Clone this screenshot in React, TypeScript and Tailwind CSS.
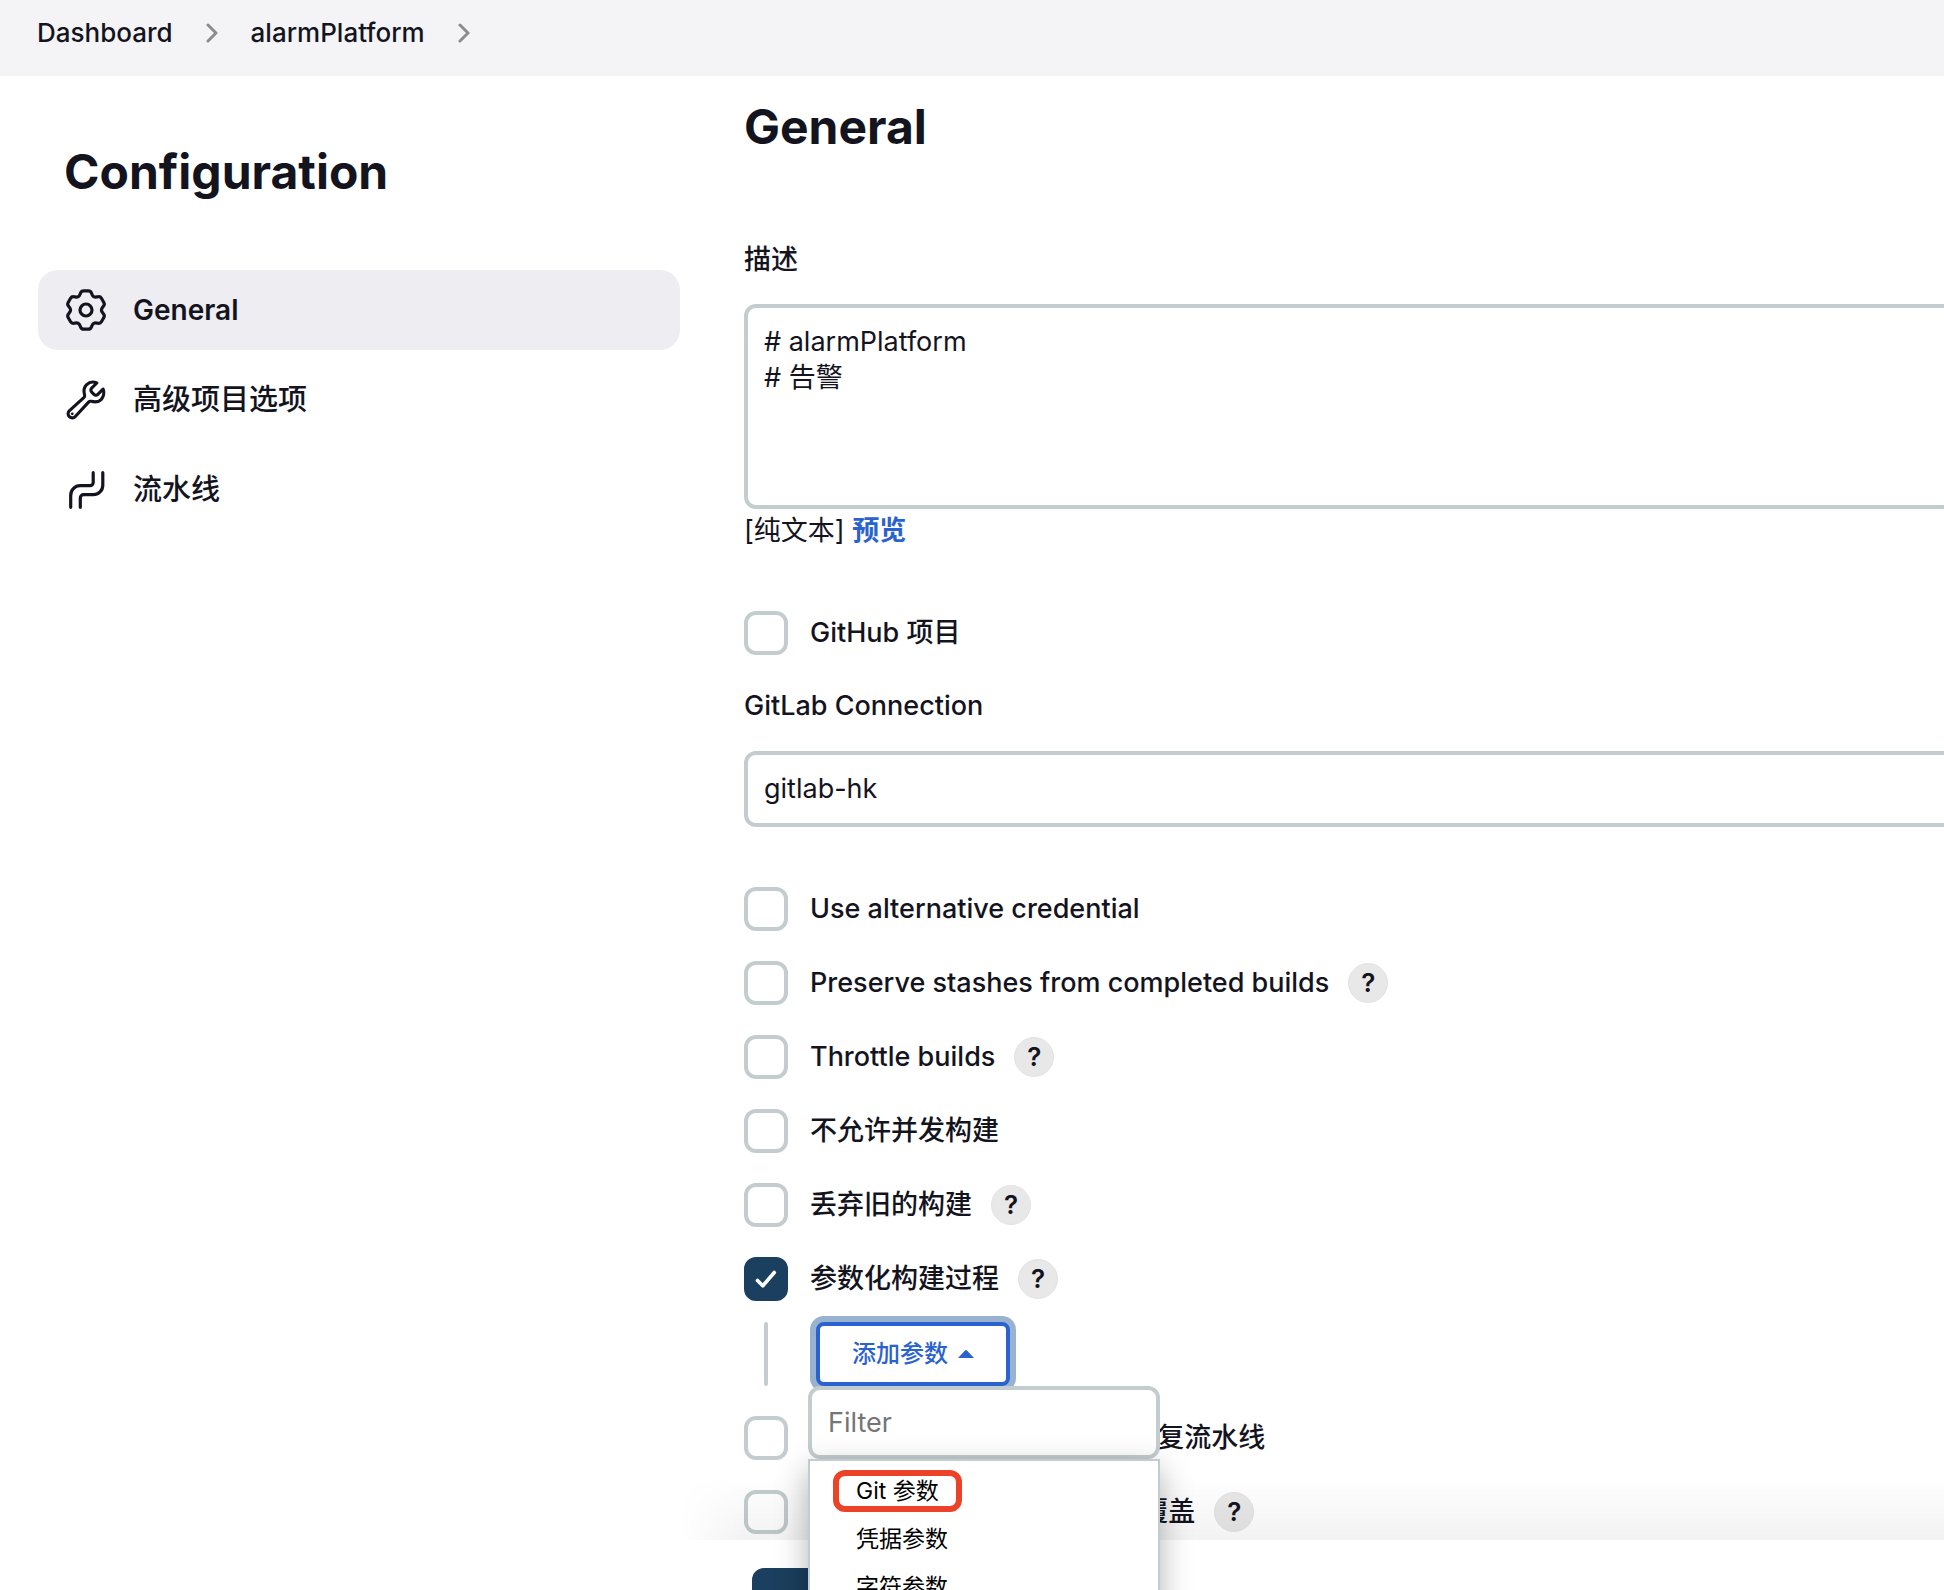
import React, { useState } from "react";
import { IoBuildOutline } from "react-icons/io5";

type Point = [number, number];

/* Closed polygon whose corners are softened by quadratic curves. */
function roundedPolygon(points: Point[], cut: number): string {
  const toward = (a: Point, b: Point): string => {
    const length = Math.hypot(b[0] - a[0], b[1] - a[1]);
    const t = Math.min(cut / length, 0.5);
    return `${(a[0] + (b[0] - a[0]) * t).toFixed(2)} ${(a[1] + (b[1] - a[1]) * t).toFixed(2)}`;
  };
  return (
    points
      .map((p, i) => {
        const previous = points[(i + points.length - 1) % points.length];
        const next = points[(i + 1) % points.length];
        return `${i === 0 ? "M" : "L"}${toward(p, previous)}Q${p[0].toFixed(2)} ${p[1].toFixed(2)} ${toward(p, next)}`;
      })
      .join("") + "Z"
  );
}

const gearPoints: Point[] = [0, 1, 2, 3, 4, 5].flatMap((k) => {
  const angle = (k * Math.PI) / 3;
  const tooth: Point[] = [
    [-4.6, -19.2],
    [4.6, -19.2],
    [6.6, -14],
    [8.8, -12.7],
  ];
  return tooth.map(
    ([x, y]): Point => [
      21 + x * Math.cos(angle) - y * Math.sin(angle),
      21 + x * Math.sin(angle) + y * Math.cos(angle),
    ],
  );
});
const gearPath = roundedPolygon(gearPoints, 2.2);

function GearIcon() {
  return (
    <svg viewBox="0 0 42 42" className="size-[42px] -m-px" fill="none" stroke="currentColor" strokeWidth="3.2" aria-hidden="true">
      <path d={gearPath} strokeLinejoin="round" />
      <circle cx="21" cy="21" r="6" />
    </svg>
  );
}

function PipelineIcon() {
  return (
    <svg viewBox="0 0 40 40" className="size-10" fill="none" stroke="currentColor" strokeWidth="3.2" strokeLinecap="round" aria-hidden="true">
      <path d="M4.7 37.3V25.5a9.5 9.5 0 0 1 9.5-9.8H24a3.2 3.2 0 0 0 3.2-3.2V2.7" />
      <path d="M14.3 37.3V27.9a3.2 3.2 0 0 1 3.2-3.2H27.3a9.5 9.5 0 0 0 9.5-9.5V2.7" />
    </svg>
  );
}

function Chevron() {
  return (
    <svg viewBox="0 0 12 20" className="h-5 w-3 text-[#8b8b90]" fill="none" stroke="currentColor" strokeWidth="3" strokeLinecap="round" strokeLinejoin="round" aria-hidden="true">
      <path d="M2 2l8 8-8 8" />
    </svg>
  );
}

function HelpButton({ topic }: { topic: string }) {
  return (
    <button
      type="button"
      title={topic}
      className="ml-[19px] flex size-10 items-center justify-center rounded-full border border-[#e3e3e3] bg-[#e8e8e8] text-[26px] leading-none font-semibold"
    >
      ?
    </button>
  );
}

function CheckRow({
  id,
  label,
  help = false,
  initial = false,
}: {
  id: string;
  label: string;
  help?: boolean;
  initial?: boolean;
}) {
  const [checked, setChecked] = useState(initial);
  return (
    <div className="flex h-11 items-center">
      <span className="relative size-11 shrink-0">
        <input
          id={id}
          type="checkbox"
          checked={checked}
          onChange={(event) => setChecked(event.target.checked)}
          className="peer block size-11 appearance-none rounded-xl border-4 border-[#c3cccf] bg-white checked:border-[#1b3f5e] checked:bg-[#1b3f5e]"
        />
        <svg
          viewBox="0 0 44 44"
          className="pointer-events-none absolute inset-0 hidden size-11 text-white peer-checked:block"
          fill="none"
          stroke="currentColor"
          strokeWidth="3.6"
          strokeLinecap="round"
          strokeLinejoin="round"
          aria-hidden="true"
        >
          <path d="M13.5 23.5l5.3 5.3L30.3 15.5" />
        </svg>
      </span>
      <label htmlFor={id} className="ml-[22px] whitespace-nowrap font-medium">
        {label}
      </label>
      {help && <HelpButton topic={label} />}
    </div>
  );
}

const sections = [
  { label: "General", icon: <GearIcon />, active: true },
  {
    label: "高级项目选项",
    icon: <IoBuildOutline className="-m-0.5 size-11 [&_path]:stroke-[36px]" aria-hidden="true" />,
    active: false,
  },
  { label: "流水线", icon: <PipelineIcon />, active: false },
];

function ParameterMenu() {
  return (
    <div className="absolute top-full -left-2 z-10 w-[352px]">
      <input
        type="text"
        placeholder="Filter"
        aria-label="Filter"
        className="block h-[73px] w-full rounded-xl border-4 border-[#c3cccf] bg-white px-4 placeholder:text-[#757575] focus:outline-none"
      />
      <ul className="w-full border-2 border-[#c3cccf] bg-white pt-1.5 pb-4 text-[23px] leading-[30px] text-black shadow-[0_10px_30px_rgba(0,0,0,0.3)]">
        <li className="flex h-12 items-center pl-[23px]">
          <button type="button" className="h-[42px] rounded-xl border-6 border-[#eb4228] px-[17px]">
            Git 参数
          </button>
        </li>
        {["凭据参数", "字符参数", "密码参数"].map((name) => (
          <li key={name} className="flex h-12 items-center pl-[46px]">
            <button type="button">{name}</button>
          </li>
        ))}
      </ul>
    </div>
  );
}

export default function App() {
  return (
    <div className="flex h-screen flex-col overflow-hidden bg-white font-['Inter','Noto_Sans_CJK_SC',sans-serif] text-[27px] leading-9 text-[#14141f]">
      <header className="h-[76px] shrink-0 bg-[#f4f4f7] pt-[15px] pl-[37px]">
        <nav aria-label="Breadcrumb" className="flex items-center gap-[33px] text-[26px] font-medium">
          <a href="#dashboard">Dashboard</a>
          <Chevron />
          <a href="#alarm-platform">alarmPlatform</a>
          <Chevron />
        </nav>
      </header>

      <div className="flex min-h-0 flex-1">
        <aside className="w-[680px] shrink-0 pt-[66px] pl-[38px]">
          <h1 className="pl-[26px] text-[48px] leading-[60px] font-bold">Configuration</h1>
          <nav aria-label="Configuration" className="mt-[68px] flex flex-col gap-[10px]">
            {sections.map((section) => (
              <a
                key={section.label}
                href={`#${section.label}`}
                className={
                  section.active
                    ? "flex h-20 items-center gap-[27px] rounded-[20px] bg-[#eeedf2] pl-7 text-[28px] font-semibold"
                    : "flex h-20 items-center gap-[27px] rounded-[20px] pl-7 text-[29px] font-medium"
                }
              >
                {section.icon}
                {section.label}
              </a>
            ))}
          </nav>
        </aside>

        <main className="relative min-w-0 flex-1 pt-[21px] pl-16">
          <form className="-mr-8 flex flex-col" onSubmit={(event) => event.preventDefault()}>
            <h2 className="text-[48px] leading-[60px] font-bold">General</h2>

            <label htmlFor="description" className="mt-[85px] font-medium">
              描述
            </label>
            <textarea
              id="description"
              defaultValue={"# alarmPlatform\n# 告警"}
              className="mt-[26px] block h-[205px] resize-none rounded-xl border-4 border-[#c3cccf] px-4 py-4"
            />
            <p className="mt-1">
              [纯文本]{" "}
              <a href="#preview" className="font-bold text-[#2a62cf]">
                预览
              </a>
            </p>

            <div className="mt-[62px]">
              <CheckRow id="github-project" label="GitHub 项目" />
            </div>

            <label htmlFor="gitlab-connection" className="mt-[33px] font-medium">
              GitLab Connection
            </label>
            <select
              id="gitlab-connection"
              className="mt-[27px] block h-[76px] appearance-none rounded-xl border-4 border-[#c3cccf] bg-white px-4"
            >
              <option>gitlab-hk</option>
            </select>

            <div className="mt-[60px] flex flex-col gap-[30px]">
              <CheckRow id="alternative-credential" label="Use alternative credential" />
              <CheckRow id="preserve-stashes" label="Preserve stashes from completed builds" help />
              <CheckRow id="throttle-builds" label="Throttle builds" help />
              <CheckRow id="no-concurrent" label="不允许并发构建" />
              <CheckRow id="discard-old" label="丢弃旧的构建" help />
              <div>
                <CheckRow id="parameterized" label="参数化构建过程" help initial />
                <div className="mt-[21px] flex pl-5">
                  <span className="w-1 rounded-full bg-[#c3cccf]" />
                  <div className="relative ml-12">
                    <button
                      type="button"
                      aria-haspopup="menu"
                      className="flex h-16 items-center gap-[10px] rounded-lg border-4 border-[#2a62cf] bg-white px-8 text-[24px] font-medium text-[#2a62cf] ring-6 ring-[#98b3d0]"
                    >
                      添加参数
                      <svg viewBox="0 0 16 8" className="h-2 w-4" fill="currentColor" aria-hidden="true">
                        <path d="M0 8L7 .6q1-1 2 0L16 8z" />
                      </svg>
                    </button>
                    <ParameterMenu />
                  </div>
                </div>
              </div>
              <CheckRow id="no-resume" label="当 Master 重启后，不允许恢复流水线" />
              <CheckRow id="durability" label="流水线效率、 持久保存设置覆盖" help />
            </div>
          </form>

          <div className="absolute inset-x-0 bottom-0">
            <div className="h-16 bg-linear-to-t from-black/5 to-transparent mask-l-from-[calc(100%-64px)] mask-l-to-100%" />
            <div className="h-[50px] overflow-hidden bg-white pt-7 pl-[72px]">
              <button type="button" className="h-16 rounded-xl bg-[#1b3f5e] px-13 text-[24px] font-medium text-white">
                保存
              </button>
            </div>
          </div>
        </main>
      </div>
    </div>
  );
}
